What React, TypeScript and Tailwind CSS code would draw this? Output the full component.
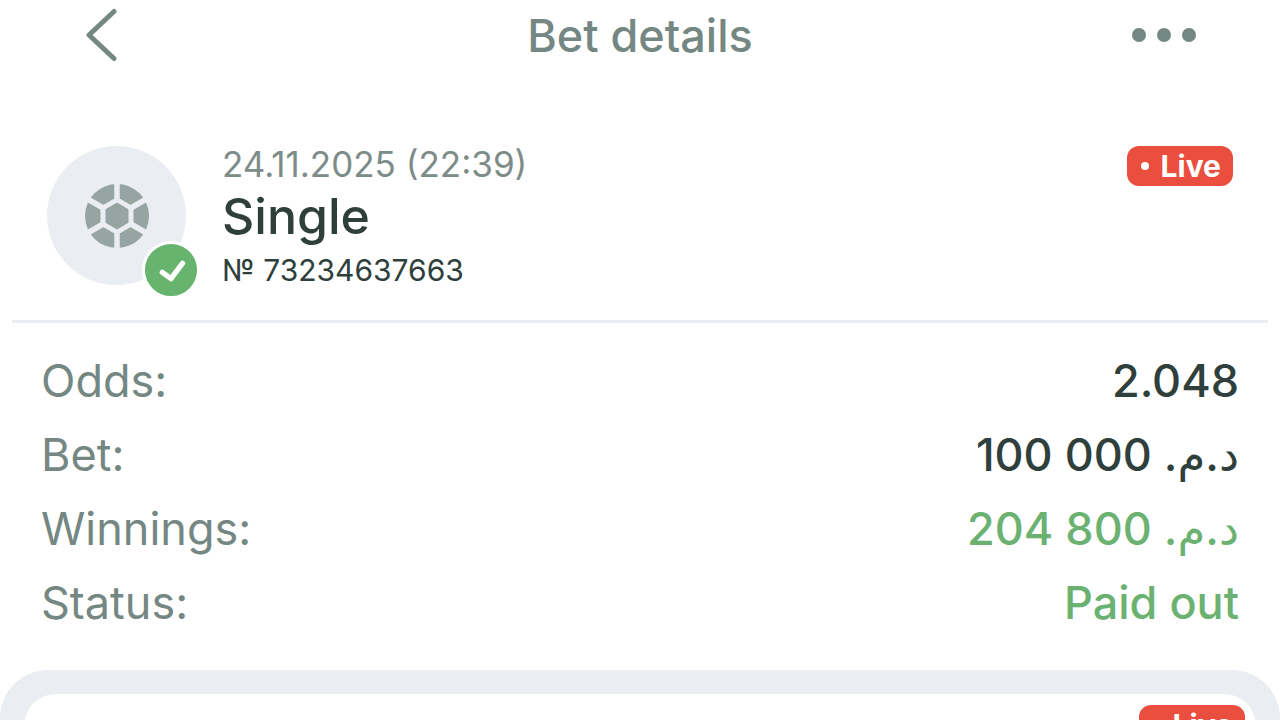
import clsx from "clsx";
import type { ReactNode } from "react";

type Row = {
  label: string;
  value: ReactNode;
  paid?: boolean;
};

function Amount({ value }: { value: string }) {
  return (
    <>
      {value} <bdi dir="rtl">د.م.</bdi>
    </>
  );
}

const rows: Row[] = [
  { label: "Odds:", value: "2.048" },
  { label: "Bet:", value: <Amount value="100 000" /> },
  { label: "Winnings:", value: <Amount value="204 800" />, paid: true },
  { label: "Status:", value: "Paid out", paid: true },
];

function LiveBadge() {
  return (
    <span className="flex h-10 shrink-0 items-center gap-3 rounded-xl bg-[#ea4e3f] px-3 text-[30px] leading-10 font-bold text-white">
      <span className="ml-0.5 size-2 rounded-full bg-white" />
      Live
    </span>
  );
}

function BallIcon() {
  return (
    <svg viewBox="-32 -32 64 64" className="size-16" aria-hidden="true">
      <circle r="32" fill="#96a5a2" />
      <g stroke="#eaedf2" strokeWidth="5.5">
        <path d="M0-33V33M-28.6-16.5L28.6 16.5M-28.6 16.5L28.6-16.5" />
        <path
          d="M0-18.5L16-9.2V9.2L0 18.5L-16 9.2V-9.2Z"
          fill="#eaedf2"
          strokeWidth="1"
          strokeLinejoin="round"
        />
      </g>
      <path
        d="M0-11.5L9.7-5.8V5.8L0 11.5L-9.7 5.8V-5.8Z"
        fill="#96a5a2"
        stroke="#96a5a2"
        strokeWidth="3.6"
        strokeLinejoin="round"
      />
    </svg>
  );
}

function Avatar() {
  return (
    <div className="relative flex size-[139px] shrink-0 items-center justify-center rounded-full bg-[#eaedf2]">
      <BallIcon />
      <span className="absolute -right-3.5 -bottom-3.5 flex size-[58px] items-center justify-center rounded-full border-3 border-white bg-[#67b46e]">
        <svg viewBox="0 0 54 54" className="size-full" aria-hidden="true">
          <path
            d="M18 29.5L27 36L39 20"
            fill="none"
            stroke="#fff"
            strokeWidth="5.5"
            strokeLinecap="round"
            strokeLinejoin="round"
          />
        </svg>
      </span>
    </div>
  );
}

export default function App() {
  return (
    <main className="flex h-screen flex-col overflow-hidden bg-white font-['Inter','DejaVu_Sans',sans-serif] text-[#2f403c]">
      <header className="grid h-[72px] shrink-0 grid-cols-[1fr_auto_1fr] items-center px-20 text-[#748783]">
        <button type="button" aria-label="Back" className="justify-self-start">
          <svg viewBox="0 0 44 56" className="h-14 w-11" aria-hidden="true">
            <path
              d="M34 3.5L9 27L34 50.5"
              fill="none"
              stroke="currentColor"
              strokeWidth="5"
              strokeLinecap="round"
              strokeLinejoin="round"
            />
          </svg>
        </button>
        <h1 className="text-[45px] leading-[56px] font-medium">Bet details</h1>
        <button type="button" aria-label="More" className="justify-self-end">
          <svg viewBox="0 0 72 56" className="h-14 w-[72px]" aria-hidden="true" fill="currentColor">
            <circle cx="11" cy="27" r="7" />
            <circle cx="36" cy="27" r="7" />
            <circle cx="61" cy="27" r="7" />
          </svg>
        </button>
      </header>

      <section className="mx-3 mt-[74px] flex shrink-0 items-start border-b-3 border-[#eaedf2] px-[35px] pb-[30px]">
        <Avatar />
        <div className="ml-9 flex-1">
          <p className="text-[35px] leading-9 text-[#7d8c89]">24.11.2025 (22:39)</p>
          <h2 className="text-[50px] leading-[68px] font-medium">Single</h2>
          <p className="text-[30px] leading-10">№ 73234637663</p>
        </div>
        <LiveBadge />
      </section>

      <dl className="mt-[21px] shrink-0 px-[41px] text-[45px] leading-[74px]">
        {rows.map((row) => (
          <div key={row.label} className="flex justify-between">
            <dt className="text-[#748783]">{row.label}</dt>
            <dd className={clsx("font-medium", row.paid && "text-[#6bb272]")}>{row.value}</dd>
          </div>
        ))}
      </dl>

      <section className="mt-[30px] min-h-0 flex-1 rounded-t-[48px] bg-[#eaedf2] px-6 pt-6">
        <div className="flex justify-end rounded-t-[32px] bg-white p-[11px]">
          <LiveBadge />
        </div>
      </section>
    </main>
  );
}
